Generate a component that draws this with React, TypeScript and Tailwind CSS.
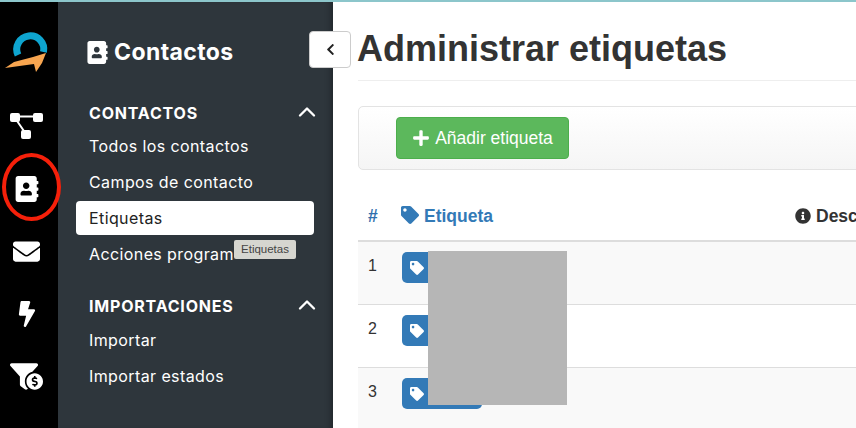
import { FaAddressBook, FaBolt, FaChevronLeft, FaEnvelope, FaFunnelDollar, FaInfoCircle, FaPlus, FaTag } from 'react-icons/fa'
import { LuChevronUp } from 'react-icons/lu'

const sideFont = { fontFamily: '"Inter", "Noto Sans", sans-serif' }

const Logo = () => (
  <svg width="48" height="44" viewBox="5 30 48 44">
    <path d="M18 55 A13.500 13.500 0 1 1 43.500 52" fill="none" stroke="#0ea5d0" strokeWidth="7" />
    <path d="M5 68 L14 62 L33 57 L46 53 L42 63 L36 72 L34 64 Z" fill="#f7a550" />
  </svg>
)

const Diagram = () => (
  <svg width="33" height="26" viewBox="10 113 33 26" fill="white">
    <path d="M15 116.500 H38 M15 118 L26 134" stroke="white" strokeWidth="2" />
    <rect x="10" y="113" width="10" height="9" rx="2" />
    <rect x="33" y="113" width="10" height="9" rx="2" />
    <rect x="21" y="130" width="10" height="9" rx="2" />
  </svg>
)

const Rail = () => (
  <div className="flex w-[58px] shrink-0 flex-col items-center bg-black pr-[5px] pt-[28px] text-white">
    <div className="h-[44px] pl-[5px]">
      <Logo />
    </div>
    <div className="mt-[39px] h-[26px]">
      <Diagram />
    </div>
    <FaAddressBook className="mt-[37px] text-[26px]" />
    <FaEnvelope className="mt-[36px] text-[27px]" />
    <FaBolt className="mt-[36px] text-[26px]" />
    <FaFunnelDollar className="mt-[33px] text-[33px]" />
  </div>
)

const SideLink = ({ label, active }: { label: string; active?: boolean }) => (
  <div
    className={`flex h-[34px] items-center whitespace-nowrap rounded-[4px] pb-[1px] pl-[13px] text-[16px] tracking-[0.4px] ${
      active ? 'bg-white text-[#222]' : 'text-white'
    }`}
  >
    {label}
  </div>
)

const SideHeading = ({ label }: { label: string }) => (
  <div className="flex h-[30px] items-center justify-between pl-[13px] text-[16px] font-bold tracking-[0.8px] text-white">
    <span>{label}</span>
    <LuChevronUp className="mb-[3px] mr-[-7px] text-[28px]" />
  </div>
)

const Sidebar = () => (
  <aside
    className="w-[275px] shrink-0 bg-[#2e363c] pl-[18px] pr-[19px] pt-[35px] shadow-[inset_-6px_0_6px_-4px_rgba(0,0,0,0.3)]"
    style={sideFont}
  >
    <div className="flex h-[30px] items-center gap-[5px] pl-[10px] text-[23px] font-bold tracking-[0.4px] text-white">
      <FaAddressBook className="text-[23px]" />
      Contactos
    </div>
    <div className="mt-[31px]">
      <SideHeading label="CONTACTOS" />
    </div>
    <div className="mt-[1px] flex flex-col gap-[2px]">
      <SideLink label="Todos los contactos" />
      <SideLink label="Campos de contacto" />
      <SideLink label="Etiquetas" active />
      <SideLink label="Acciones program" />
    </div>
    <div className="mt-[20px]">
      <SideHeading label="IMPORTACIONES" />
    </div>
    <div className="mt-[2px] flex flex-col gap-[2px]">
      <SideLink label="Importar" />
      <SideLink label="Importar estados" />
    </div>
  </aside>
)

const Row = ({ n, striped }: { n: number; striped?: boolean }) => (
  <div className={`flex h-[63px] border-b border-[#ddd] ${striped ? 'bg-[#f9f9f9]' : 'bg-white'}`}>
    <div className="w-[44px] pl-[10px] pt-[12px] text-[16px] text-[#333]">{n}</div>
    <div className="pt-[10px]">
      <div className="flex h-[31px] w-[80px] items-center rounded-[5px] bg-[#337ab7] pl-[8px] text-[14px] text-white">
        <FaTag />
      </div>
    </div>
  </div>
)

const Main = () => (
  <main className="min-w-0 flex-1 overflow-hidden bg-white pl-[25px] text-[#333]" style={{ fontFamily: '"Liberation Sans", Arial, sans-serif' }}>
    <div className="h-[79px] border-b border-[#eee] pt-[24px]">
      <h1 className="ml-[-1px] whitespace-nowrap text-[36px] font-bold leading-[46px] text-[#333]">Administrar etiquetas</h1>
    </div>
    <div className="mt-[25px] flex h-[64px] w-[600px] items-center rounded-l-[5px] border border-[#e3e3e3] bg-linear-to-b from-white to-[#f5f5f5] pl-[37px]">
      <button
        type="button"
        className="flex h-[42px] w-[173px] items-center justify-center gap-[5px] whitespace-nowrap rounded-[4px] border border-[#4cae4c] bg-[#5cb85c] text-[17.500px] text-white"
      >
        <FaPlus className="text-[18px]" />
        Añadir etiqueta
      </button>
    </div>
    <div className="flex h-[72px] items-end border-b-2 border-[#ddd] pb-[11px] text-[17.500px] font-bold">
      <span className="w-[43px] shrink-0 pl-[10px] text-[#2f6fad]">#</span>
      <span className="flex w-[394px] shrink-0 items-center gap-[5px] text-[#337ab7]">
        <FaTag className="mb-[2px] text-[18px]" />
        Etiqueta
      </span>
      <span className="flex shrink-0 items-center gap-[5px] whitespace-nowrap">
        <FaInfoCircle className="text-[16px]" />
        Descripción
      </span>
    </div>
    <Row n={1} striped />
    <Row n={2} />
    <Row n={3} striped />
  </main>
)

export default function App() {
  return (
    <div className="relative flex h-[428px] w-[856px] flex-col overflow-hidden bg-white">
      <div className="h-[2px] shrink-0 bg-[#8cc6cb]" />
      <div className="flex min-h-0 flex-1">
        <Rail />
        <Sidebar />
        <Main />
      </div>

      {/* red marker around the contacts icon */}
      <div className="absolute left-[2px] top-[153px] h-[68px] w-[59px] rounded-[50%] border-[4px] border-[#f5200a]" />

      {/* collapse button */}
      <div className="absolute left-[309px] top-[31px] flex h-[37px] w-[42px] items-center justify-center rounded-[4px] border border-[#ccc] bg-white text-[#222]">
        <FaChevronLeft className="text-[13px]" />
      </div>

      {/* tooltip */}
      <div
        className="absolute left-[234px] top-[240px] flex h-[19px] w-[62px] items-center justify-center rounded-[2px] bg-[#d6d6d0] text-[11.500px] text-[#444]"
        style={{ fontFamily: '"Liberation Sans", Arial, sans-serif' }}
      >
        Etiquetas
      </div>

      {/* blurred out tag names */}
      <div className="absolute left-[428px] top-[251px] h-[154px] w-[139px] bg-[#b6b6b6]" />
    </div>
  )
}
